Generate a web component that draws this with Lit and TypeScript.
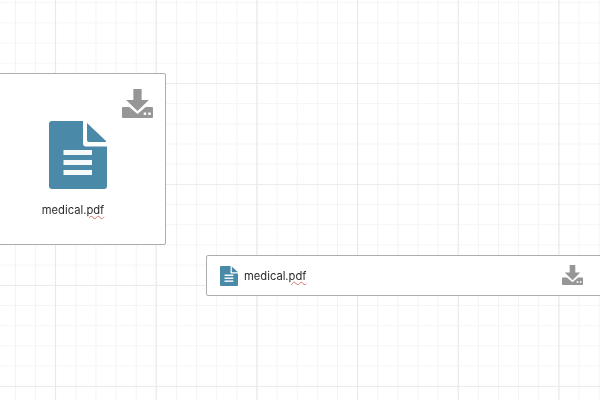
import { LitElement, html, css, svg } from "lit";
import { customElement } from "lit/decorators.js";

const fileIcon = svg`<path d="M3 0H34V22Q34 25.500 37 25.500H58V65Q58 68 55 68H3Q0 68 0 65V3Q0 0 3 0Z" fill="#4a8aa8"/>
<path d="M38 2L57 20V21H40Q38 21 38 19Z" fill="#4a8aa8"/>
<rect x="14.500" y="29" width="28.500" height="5" fill="#f6f9fa"/><rect x="14.500" y="39" width="28.500" height="5" fill="#f6f9fa"/><rect x="14.500" y="49" width="28.500" height="5" fill="#f6f9fa"/>`;

const dlIcon = svg`<path d="M11 0H19V11H26L15 22L4 11H11Z" fill="#969696"/>
<path d="M1 18H7L15 25L23 18H29Q30 18 30 19V28Q30 29 29 29H1Q0 29 0 28V19Q0 18 1 18Z" fill="#969696"/>
<rect x="21" y="23.500" width="2.400" height="2.400" fill="#fff"/><rect x="25.400" y="23.500" width="2.400" height="2.400" fill="#fff"/>`;

@customElement("app-root")
export class AppRoot extends LitElement {
  static styles = css`
    :host { display: block; width: 600px; height: 400px; overflow: hidden; }
    .canvas {
      position: relative; width: 600px; height: 400px; overflow: hidden; background-color: #fff;
      background-image:
        linear-gradient(to right, #e8e8e8 1px, transparent 1px),
        linear-gradient(to bottom, #ececec 1px, transparent 1px),
        linear-gradient(to right, #f3f3f3 1px, transparent 1px),
        linear-gradient(to bottom, #f5f5f5 1px, transparent 1px);
      background-size: 100.7px 100%, 100% 101px, 20.14px 100%, 100% 20.2px;
      background-position: 55px 0, 0 83px, 15px 0, 0 2.2px;
    }
    .node { position: absolute; box-sizing: border-box; background: #fff; border: 1.5px solid #adadad; border-radius: 2px;
      font-family: Inter, "Liberation Sans", sans-serif; color: #2a2a2a; font-size: 11.2px; }
    .soft { filter: blur(.6px); }
    .big { left: -40px; top: 73px; width: 206px; height: 172px; display: flex; flex-direction: column; align-items: center; padding-top: 46.500px; padding-left: 20px; }
    .big .file { width: 58px; height: 68px; margin-left: 10px; flex: none; }
    .big .name { margin-top: 13px; line-height: 16px; }
    .big .dl { position: absolute; right: 12px; top: 15px; width: 31px; height: 29px; }
    .wide { left: 206px; top: 255px; width: 400px; height: 41px; display: flex; align-items: center; gap: 6px; padding-left: 13px; }
    .wide .file { width: 18px; height: 20px; flex: none; }
    .wide .dl { position: absolute; right: 22px; top: 9px; width: 21px; height: 20px; }
    .sp { text-decoration: underline wavy #e0706c 1px; text-underline-offset: 1px; }
  `;
  render() {
    return html`<div class="canvas">
      <div class="node big">
        <svg class="file soft" viewBox="0 0 58 68">${fileIcon}</svg>
        <div class="name soft">medical.<span class="sp">pdf</span></div>
        <svg class="dl soft" viewBox="0 0 30 29" preserveAspectRatio="none">${dlIcon}</svg>
      </div>
      <div class="node wide">
        <svg class="file soft" viewBox="0 0 58 68" preserveAspectRatio="none">${fileIcon}</svg>
        <div class="name soft">medical.<span class="sp">pdf</span></div>
        <svg class="dl soft" viewBox="0 0 30 29" preserveAspectRatio="none">${dlIcon}</svg>
      </div>
    </div>`;
  }
}
